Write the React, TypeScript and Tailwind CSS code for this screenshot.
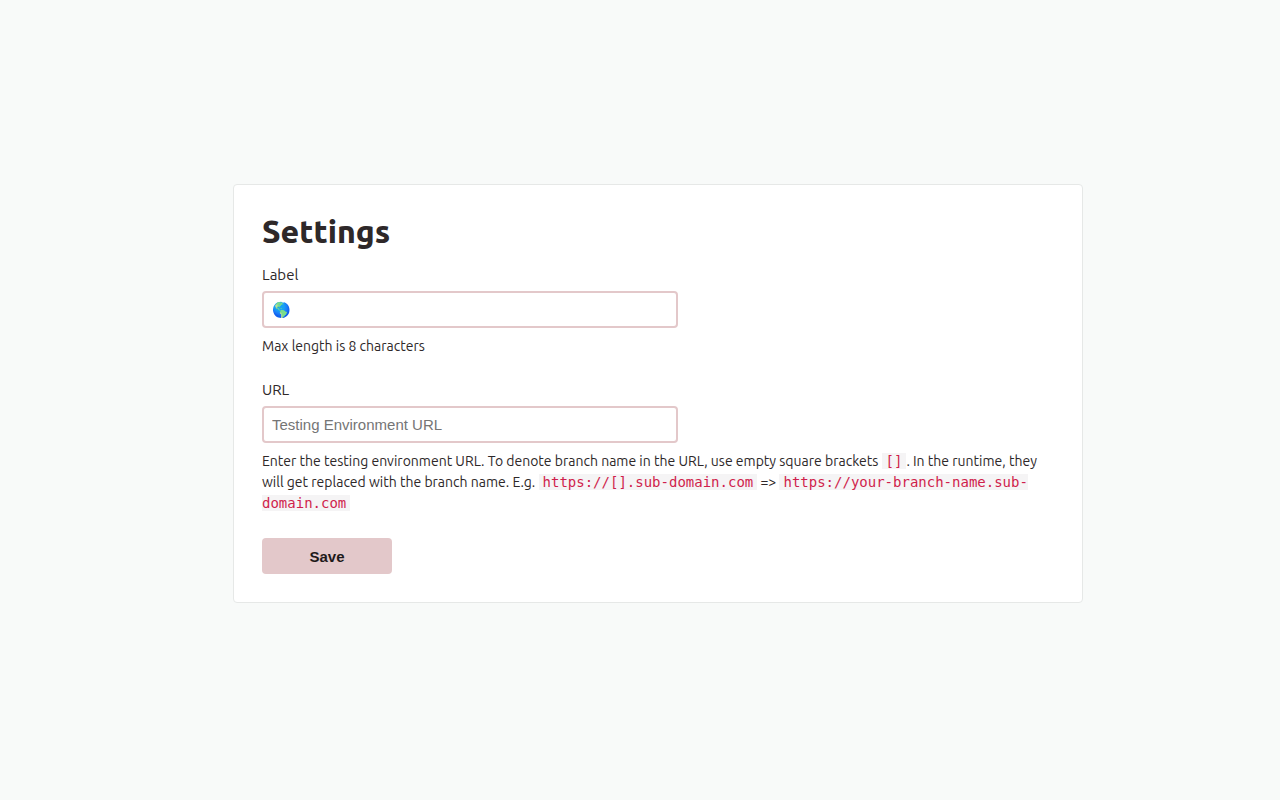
import React from "react";

function Code({ children }: { children: React.ReactNode }) {
  return (
    <code className="bg-[#f5f4f5] px-1 font-['DejaVu_Sans_Mono',monospace] text-sm text-[#d01f4c]">
      {children}
    </code>
  );
}

const inputClass =
  "mt-1.5 block h-[37px] w-full max-w-[416px] rounded border-2 border-[#e3c8ca] bg-white px-2 font-['Liberation_Sans',Arial,sans-serif] text-[15px] text-[#2e2829] outline-none placeholder:text-[#757575]";

export default function App() {
  return (
    <main className="flex min-h-screen justify-center bg-[#f8faf9] pt-[184px] pl-9 font-['Ubuntu','Noto_Sans',sans-serif] text-sm leading-[21px] text-[#2e2829]">
      <form
        className="h-fit w-full max-w-[850px] rounded border border-[#e6e8e7] bg-white p-7"
        onSubmit={(e) => e.preventDefault()}
      >
        <h1 className="text-[32px] leading-9 font-extrabold">Settings</h1>
        <div className="mt-[15px]">
          <label htmlFor="label" className="block text-[15px]">Label</label>
          <input id="label" className={inputClass} maxLength={8} defaultValue="🌎" />
          <p className="mt-2">Max length is 8 characters</p>
        </div>
        <div className="mt-[22px]">
          <label htmlFor="url" className="block text-[15px]">URL</label>
          <input id="url" className={inputClass} placeholder="Testing Environment URL" />
          <p className="mt-2">
            Enter the testing environment URL. To denote branch name in the URL, use empty square brackets{" "}
            <Code>[]</Code>. In the runtime, they will get replaced with the branch name. E.g.{" "}
            <Code>https://[].sub-domain.com</Code> =&gt; <Code>https://your-branch-name.sub-domain.com</Code>
          </p>
        </div>
        <button
          type="submit"
          className="mt-6 block h-9 w-[130px] rounded bg-[#e3c8ca] font-['Liberation_Sans',Arial,sans-serif] text-[15px] font-bold text-[#1f1a1b]"
        >
          Save
        </button>
      </form>
    </main>
  );
}
